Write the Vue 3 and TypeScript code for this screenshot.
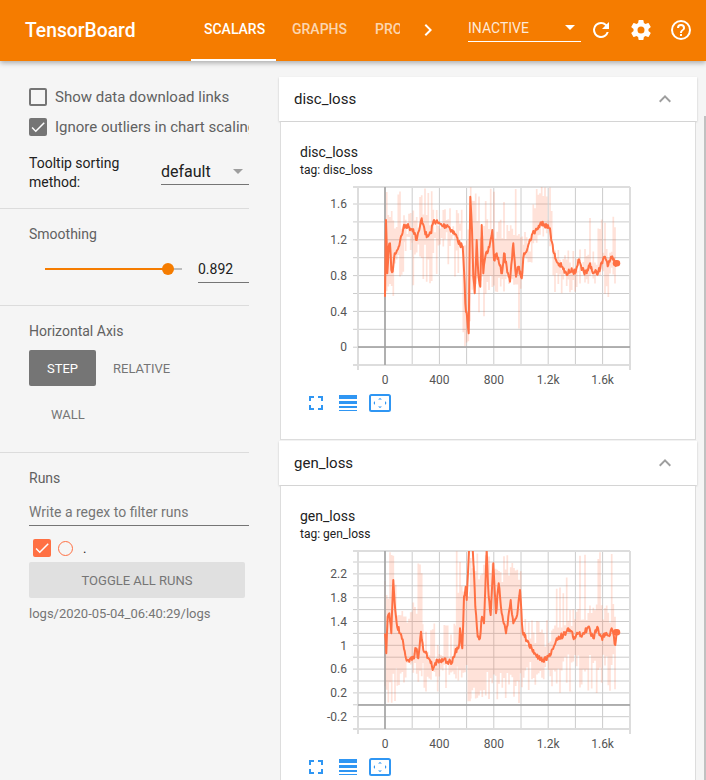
<script setup lang="ts">
type Pt = [number, number]
// x0, x1, spike top, spike bottom, core top, core bottom
type Env = [number, number, number, number, number, number]

function rng(seed: number) {
  let s = seed
  return () => {
    s = (s * 16807) % 2147483647
    return (s - 1) / 2147483646
  }
}

// Points are given at 3x scale, relative to a crop origin shifted by each chart's `off`
function linePath(pts: Pt[], seed: number): string {
  const r = rng(seed)
  const out: string[] = []
  for (let i = 0; i < pts.length; i++) {
    const [x, y] = pts[i]
    out.push(`${(x / 3).toFixed(1)},${(y / 3).toFixed(1)}`)
    if (i < pts.length - 1) {
      const [nx, ny] = pts[i + 1]
      if (nx - x > 3) {
        const n = Math.floor((nx - x) / 2)
        for (let k = 1; k < n; k++) {
          const t = k / n
          const jx = x + (nx - x) * t
          const jy = y + (ny - y) * t + (r() - 0.5) * 18
          out.push(`${(jx / 3).toFixed(1)},${(jy / 3).toFixed(1)}`)
        }
      }
    }
  }
  return 'M' + out.join('L')
}

function bandPath(env: Env[], seed: number): string {
  const r = rng(seed)
  let d = ''
  for (const [x0, x1, top, bottom, coreTop, coreBottom] of env) {
    for (let x = x0; x < x1; x += 5) {
      const tt = r() > 0.72 ? top + (coreTop - top) * r() * 0.5 : coreTop + (r() - 0.2) * 60
      const bb = r() > 0.72 ? bottom - (bottom - coreBottom) * r() * 0.5 : coreBottom - (r() - 0.2) * 60
      d += `M${(x / 3).toFixed(1)} ${(tt / 3).toFixed(1)}V${(bb / 3).toFixed(1)}`
    }
  }
  return d
}

const disc: Pt[] = [[255,500],[258,270],[262,430],[266,350],[270,340],[274,420],[278,425],[284,370],[292,360],[300,335],[310,295],[318,285],[328,292],[340,298],[350,330],[358,300],[365,265],[372,290],[380,322],[392,310],[402,270],[415,280],[428,288],[442,285],[455,300],[470,320],[480,345],[488,350],[492,420],[496,520],[502,570],[506,610],[511,200],[516,300],[520,440],[524,490],[530,330],[535,430],[541,470],[545,285],[550,430],[556,380],[562,370],[570,340],[577,300],[582,390],[590,370],[597,400],[606,430],[612,370],[620,410],[630,455],[640,340],[648,440],[655,410],[665,445],[672,370],[685,345],[698,310],[712,295],[728,275],[740,290],[750,295],[760,365],[770,395],[785,410],[800,435],[815,415],[825,430],[835,390],[845,420],[860,430],[870,400],[880,430],[895,425],[915,380],[925,405],[935,385],[945,400],[955,400]]
const gen: Pt[] = [[255,400],[259,460],[263,350],[268,340],[274,400],[280,240],[284,310],[290,370],[300,400],[310,430],[318,475],[328,485],[340,475],[348,445],[355,475],[363,395],[370,450],[380,460],[392,490],[400,505],[412,480],[430,480],[455,490],[465,460],[478,430],[480,385],[487,445],[492,290],[497,260],[500,300],[510,100],[516,110],[522,220],[526,320],[533,410],[540,415],[546,350],[552,370],[560,150],[566,290],[572,345],[580,190],[588,340],[596,250],[605,340],[618,400],[625,350],[632,300],[640,370],[650,350],[660,270],[668,395],[680,420],[700,450],[720,480],[740,480],[755,450],[770,415],[790,405],[805,385],[825,415],[835,400],[845,410],[865,380],[880,415],[892,380],[907,420],[915,400],[930,405],[935,385],[946,435],[950,395],[955,397]]

const discEnv: Env[] = [
  [255, 285, 170, 610, 250, 500],
  [285, 312, 170, 440, 260, 400],
  [312, 340, 240, 380, 280, 340],
  [340, 405, 170, 470, 250, 390],
  [405, 490, 230, 440, 270, 350],
  [490, 512, 170, 650, 300, 600],
  [512, 670, 170, 600, 280, 480],
  [670, 700, 300, 400, 330, 390],
  [700, 760, 170, 350, 230, 320],
  [760, 860, 350, 490, 380, 460],
  [860, 950, 260, 510, 360, 460],
]
const genEnv: Env[] = [
  [255, 287, 153, 610, 250, 560],
  [287, 340, 210, 560, 330, 530],
  [340, 368, 153, 550, 300, 530],
  [368, 470, 370, 575, 440, 530],
  [470, 512, 153, 610, 250, 540],
  [512, 666, 153, 610, 200, 560],
  [666, 760, 350, 575, 400, 530],
  [760, 830, 230, 580, 340, 510],
  [830, 950, 153, 580, 320, 510],
]

interface Chart {
  title: string
  off: number
  zeroY: number
  yLabels: { y: number; t: string }[]
  hLines: number[]
  line: string
  band: string
  endY: number
}

const vLines = [0, 27.2, 54.4, 81.6, 108.8, 136, 163.2, 190.4, 217.6, 244.8].map((v) => 85 + v)
const xLabels = [
  { x: 85, t: '0' },
  { x: 139.4, t: '400' },
  { x: 193.8, t: '800' },
  { x: 248.2, t: '1.2k' },
  { x: 302.6, t: '1.6k' },
]

function seq(start: number, step: number, end: number): number[] {
  const a: number[] = []
  for (let y = start; y <= end; y += step) a.push(Math.round(y * 10) / 10)
  return a
}

const charts: Chart[] = [
  {
    title: 'disc_loss',
    off: -52,
    zeroY: 165,
    yLabels: [
      { y: 22, t: '1.6' },
      { y: 58, t: '1.2' },
      { y: 94, t: '0.8' },
      { y: 130, t: '0.4' },
      { y: 165, t: '0' },
    ],
    hLines: seq(22, 17.9, 183),
    line: linePath(disc, 7),
    band: bandPath(discEnv, 11),
    endY: 81.3,
  },
  {
    title: 'gen_loss',
    off: -46,
    zeroY: 159,
    yLabels: [
      { y: 28, t: '2.2' },
      { y: 52, t: '1.8' },
      { y: 76, t: '1.4' },
      { y: 100, t: '1' },
      { y: 123, t: '0.6' },
      { y: 147, t: '0.2' },
      { y: 171, t: '-0.2' },
    ],
    hLines: seq(16, 11.9, 183),
    line: linePath(gen, 23),
    band: bandPath(genEnv, 31),
    endY: 86.3,
  },
]

const tabs = ['Scalars', 'Graphs', 'Profile']
</script>

<template>
  <div class="page">
    <header class="bar">
      <div class="brand">TensorBoard</div>
      <nav class="tabs">
        <span v-for="(t, i) in tabs" :key="t" class="tab" :class="{ on: i === 0 }">{{ t }}</span>
      </nav>
      <svg class="chev" width="24" height="24" viewBox="0 0 24 24"><path d="M8.6 16.6 13.2 12 8.6 7.4 10 6l6 6-6 6z" fill="#fff" /></svg>
      <div class="status">
        <span>INACTIVE</span>
        <i class="tri white"></i>
      </div>
      <svg class="act first" width="24" height="24" viewBox="0 0 24 24"><path d="M17.65 6.35A7.96 7.96 0 0 0 12 4a8 8 0 1 0 7.73 10h-2.08A6 6 0 1 1 12 6c1.66 0 3.14.69 4.22 1.78L13 11h7V4l-2.35 2.35z" fill="#fff" /></svg>
      <svg class="act" width="24" height="24" viewBox="0 0 24 24"><path d="M19.43 12.98c.04-.32.07-.64.07-.98s-.03-.66-.07-.98l2.11-1.65a.5.5 0 0 0 .12-.64l-2-3.46a.5.5 0 0 0-.61-.22l-2.49 1a7.3 7.3 0 0 0-1.69-.98l-.38-2.65A.49.49 0 0 0 14 2h-4a.49.49 0 0 0-.49.42l-.38 2.65c-.61.25-1.17.59-1.69.98l-2.49-1a.5.5 0 0 0-.61.22l-2 3.46a.49.49 0 0 0 .12.64l2.11 1.65c-.04.32-.07.65-.07.98s.03.66.07.98l-2.11 1.65a.5.5 0 0 0-.12.64l2 3.46c.12.22.39.3.61.22l2.49-1c.52.4 1.08.73 1.69.98l.38 2.65c.03.24.24.42.49.42h4c.25 0 .46-.18.49-.42l.38-2.65c.61-.25 1.17-.59 1.69-.98l2.49 1c.23.09.49 0 .61-.22l2-3.46a.5.5 0 0 0-.12-.64l-2.11-1.65zM12 15.5a3.5 3.5 0 1 1 0-7 3.5 3.5 0 0 1 0 7z" fill="#fff" /></svg>
      <svg class="act" width="24" height="24" viewBox="0 0 24 24"><path d="M11 18h2v-2h-2v2zm1-16a10 10 0 1 0 0 20 10 10 0 0 0 0-20zm0 18a8 8 0 1 1 0-16 8 8 0 0 1 0 16zm0-14a4 4 0 0 0-4 4h2a2 2 0 1 1 4 0c0 2-3 1.75-3 5h2c0-2.25 3-2.5 3-5a4 4 0 0 0-4-4z" fill="#fff" /></svg>
    </header>

    <div class="main">
      <aside class="side">
        <section class="sec first-sec">
          <label class="check">
            <span class="box"></span>
            <span class="clip">Show data download links</span>
          </label>
          <label class="check second">
            <span class="box filled">
              <svg width="18" height="18" viewBox="0 0 24 24"><path d="M9 16.2 4.8 12l-1.4 1.4L9 19 21 7l-1.4-1.4z" fill="#fff" /></svg>
            </span>
            <span class="clip">Ignore outliers in chart scaling</span>
          </label>
          <div class="sort">
            <div class="sort-label">Tooltip sorting method:</div>
            <div class="select"><span>default</span><i class="tri grey"></i></div>
          </div>
        </section>

        <section class="sec smooth">
          <h3>Smoothing</h3>
          <div class="slider-row">
            <div class="slider"><div class="fill"></div><div class="thumb"></div></div>
            <div class="num">0.892</div>
          </div>
        </section>

        <section class="sec axis">
          <h3>Horizontal Axis</h3>
          <div class="axis-btns">
            <span class="btn active">STEP</span>
            <span class="btn rel">RELATIVE</span>
            <span class="btn wall">WALL</span>
          </div>
        </section>

        <section class="runs">
          <h3>Runs</h3>
          <div class="filter">Write a regex to filter runs</div>
          <div class="run">
            <span class="box run-box">
              <svg width="18" height="18" viewBox="0 0 24 24"><path d="M9 16.2 4.8 12l-1.4 1.4L9 19 21 7l-1.4-1.4z" fill="#fff" /></svg>
            </span>
            <span class="dot"></span>
            <span class="run-name">.</span>
          </div>
          <div class="toggle">TOGGLE ALL RUNS</div>
          <div class="logdir">logs/2020-05-04_06:40:29/logs</div>
        </section>
      </aside>

      <main class="content">
        <article v-for="c in charts" :key="c.title" class="group">
          <div class="group-head">
            <span>{{ c.title }}</span>
            <svg width="24" height="24" viewBox="0 0 24 24"><path d="M12 8l-6 6 1.4 1.4L12 10.8l4.6 4.6L18 14z" fill="#9e9e9e" /></svg>
          </div>
          <div class="card">
            <div class="card-title">{{ c.title }}</div>
            <div class="card-tag">tag: {{ c.title }}</div>
            <svg class="plot" width="350" height="206" viewBox="0 0 350 206">
              <defs>
                <clipPath :id="'clip-' + c.title"><rect x="58" y="5" width="272" height="178" /></clipPath>
              </defs>
              <g stroke="#ccc" stroke-width="1" fill="none">
                <line v-for="v in vLines" :key="v" :x1="v" :x2="v" y1="5" y2="183" />
                <line v-for="h in c.hLines" :key="h" x1="53" x2="330" :y1="h" :y2="h" />
              </g>
              <g stroke="#ddd" stroke-width="2" fill="none">
                <path d="M58 5V188M330 5V188M53 5H330M53 183H330" />
              </g>
              <g :clip-path="'url(#clip-' + c.title + ')'">
                <path :d="c.band" :transform="'translate(0 ' + c.off + ')'" stroke="#ff7043" stroke-opacity="0.2" stroke-width="1.7" fill="none" />
              </g>
              <g stroke="#9e9e9e" stroke-width="1.5" fill="none">
                <line x1="85" x2="85" y1="5" y2="183" />
                <line x1="58" x2="330" :y1="c.zeroY" :y2="c.zeroY" />
              </g>
              <g :clip-path="'url(#clip-' + c.title + ')'">
                <path :d="c.line" :transform="'translate(0 ' + c.off + ')'" stroke="#ff7043" stroke-width="2" fill="none" stroke-linejoin="round" />
              </g>
              <line x1="316" x2="317" :y1="c.endY" :y2="c.endY" stroke="#ff7043" stroke-width="6.5" stroke-linecap="round" />
              <g class="lbl">
                <text v-for="l in c.yLabels" :key="l.t" x="47" :y="l.y + 4" text-anchor="end">{{ l.t }}</text>
                <text v-for="l in xLabels" :key="l.t" :x="l.x" y="202" text-anchor="middle">{{ l.t }}</text>
              </g>
            </svg>
            <div class="tools">
              <svg width="14" height="14" viewBox="0 0 14 14"><path d="M0 5V0h5v2H2v3zM9 0h5v5h-2V2H9zM14 9v5H9v-2h3V9zM5 14H0V9h2v3h3z" fill="#2f96f3" /></svg>
              <svg width="18" height="16" viewBox="0 0 18 16"><path d="M0 0h18v4H0zM0 6h18v3H0zM0 11h18v2H0zM0 15h18v1H0z" fill="#2f96f3" /></svg>
              <svg class="fit" width="22" height="18" viewBox="0 0 22 18"><rect x="1" y="1" width="20" height="16" rx="1.5" fill="none" stroke="#2f96f3" stroke-width="2" /><path d="M11 4l2 1.5H9zM11 14l2-1.5H9zM4.5 9 6 7v4zM17.5 9 16 7v4z" fill="#2f96f3" /></svg>
            </div>
          </div>
        </article>
      </main>
      <div class="scroll"></div>
    </div>
  </div>
</template>

<style>
html, body { margin: 0; height: 100%; overflow: hidden; background: #f5f5f5; }
</style>

<style scoped>
.page { width: 706px; height: 780px; overflow: hidden; font-family: Roboto, "Liberation Sans", sans-serif; background: #f5f5f5; position: relative; }
.bar { height: 61px; padding-bottom: 1px; box-sizing: border-box; background: #f57c00; display: flex; align-items: center; color: #fff; box-shadow: 0 2px 5px rgba(0,0,0,.3); position: relative; z-index: 2; }
.brand { font-size: 19.3px; font-weight: 500; margin-left: 25px; width: 166px; flex: none; }
.tabs { width: 209px; flex: none; height: 61px; overflow: hidden; display: flex; align-self: flex-start; }
.tab { text-transform: uppercase; font-size: 14px; font-weight: 500; padding: 0 12px 0 16px; height: 61px; line-height: 59px; color: rgba(255,255,255,.7); box-sizing: border-box; flex: none; }
.tab.on { color: #fff; border-bottom: 2px solid #fff; padding: 0 12px 0 13px; width: 85px; text-align: center; margin-right: 0; }
.chev { margin-left: 16px; flex: none; }
.status { margin-left: 28px; width: 113px; height: 27px; flex: none; border-bottom: 1px solid #fff; box-sizing: border-box; display: flex; align-items: center; justify-content: space-between; font-size: 14px; color: rgba(255,255,255,.85); position: relative; top: -2px; padding-right: 6px; }
.tri { width: 0; height: 0; border-left: 5px solid transparent; border-right: 5px solid transparent; }
.tri.white { border-top: 5px solid #fff; }
.tri.grey { border-top: 5px solid #9e9e9e; }
.act { flex: none; margin-left: 16px; }
.act.first { margin-left: 8px; }

.main { display: flex; align-items: flex-start; }
.side { width: 249px; flex: none; margin-right: 30px; color: #616161; font-size: 14px; }
.sec { border-bottom: 1px solid #dcdcdc; padding-left: 29px; box-sizing: border-box; }
.first-sec { height: 148px; padding-top: 27px; }
.check { display: flex; align-items: center; gap: 8px; height: 18px; }
.check.second { margin-top: 12px; }
.clip { white-space: nowrap; overflow: hidden; font-size: 15px; width: 194px; }
.box { width: 18px; height: 18px; box-sizing: border-box; border: 2px solid #757575; border-radius: 2px; flex: none; display: block; }
.box.filled { background: #757575; border: 0; }
.sort { display: flex; margin-top: 18px; align-items: flex-start; }
.sort-label { width: 132px; color: #212121; line-height: 19px; }
.select { width: 88px; height: 27px; border-bottom: 1px solid #757575; box-sizing: border-box; display: flex; align-items: center; justify-content: space-between; font-size: 16px; color: #212121; padding-right: 6px; margin-top: 4px; }
h3 { margin: 0; font-size: 14px; font-weight: 400; color: #616161; }
.smooth { height: 97px; padding-top: 17px; }
.slider-row { display: flex; align-items: flex-start; margin-top: 17px; }
.slider { width: 137px; height: 2px; background: #bdbdbd; margin: 9px 16px 0 16px; position: relative; flex: none; }
.fill { width: 123px; height: 2px; background: #f57c00; }
.thumb { position: absolute; left: 117px; top: -5px; width: 12px; height: 12px; border-radius: 50%; background: #f57c00; }
.num { width: 51px; height: 24px; margin-left: 0; border-bottom: 1px solid #757575; color: #212121; box-sizing: border-box; line-height: 20px; }
.axis { height: 147px; padding-top: 17px; }
.axis-btns { display: flex; flex-wrap: wrap; margin-top: 11px; font-size: 13px; }
.btn { display: block; height: 36px; line-height: 37px; color: #757575; text-align: center; }
.btn.active { width: 67px; background: #757575; color: #fff; border-radius: 2px; }
.btn.rel { margin-left: 17px; width: 120px; text-align: left; }
.btn.wall { margin: 10px 0 0 22px; }
.runs { padding: 17px 0 0 29px; }
.filter { margin-top: 9px; height: 31px; padding-top: 5px; line-height: 24px; border-bottom: 1px solid #757575; color: #757575; box-sizing: border-box; width: 220px; }
.run { display: flex; align-items: center; height: 18px; margin: 13px 0 0 4px; }
.run-box { background: #ff7043; border: 0; }
.dot { width: 15px; height: 15px; box-sizing: border-box; border: 1.5px solid #ff7043; border-radius: 50%; margin-left: 7px; }
.run-name { margin-left: 10px; font-size: 13px; color: #212121; }
.toggle { width: 216px; height: 36px; line-height: 37px; text-align: center; background: #e0e0e0; color: #757575; font-size: 13px; border-radius: 2px; margin-top: 5px; }
.logdir { font-size: 13px; color: #757575; margin-top: 8px; }

.content { width: 418px; flex: none; padding-top: 16px; }
.group { margin-bottom: 1px; }
.group-head { height: 44px; background: #fff; box-shadow: 0 1px 2px rgba(0,0,0,.2); display: flex; align-items: center; justify-content: space-between; padding: 0 20px 0 15px; font-size: 15px; color: #212121; }
.card { height: 318px; margin: 1px 1px 0; background: #fff; box-sizing: border-box; border: 1px solid #ddd; border-top: 0; padding: 21px 0 0 19px; }
.card-title { font-size: 14px; color: #212121; line-height: 19px; }
.card-tag { font-size: 12px; color: #212121; line-height: 17px; margin-top: 0; }
.plot { display: block; margin-top: 3px; }
.tools { display: flex; align-items: center; gap: 16px; margin: 6px 0 0 9px; height: 18px; }
.fit { margin-left: -4px; }
.lbl { font-size: 12px; fill: #555; }
.scroll { width: 2px; height: 664px; background: #c1c1c1; margin: 55px 0 0 7px; flex: none; }
</style>
